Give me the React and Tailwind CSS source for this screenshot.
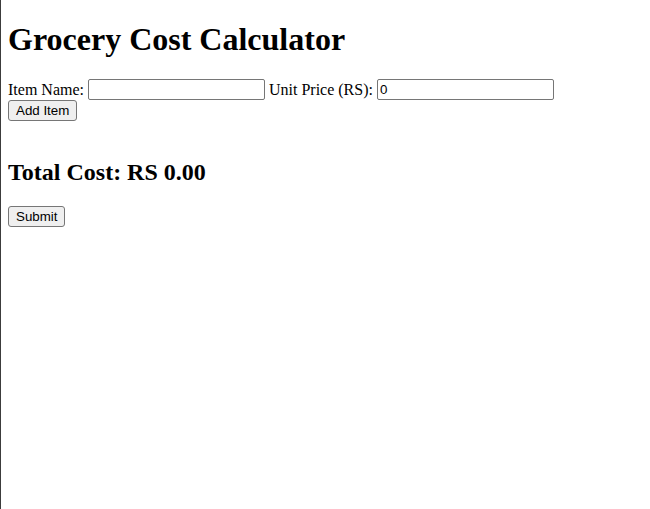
import { useState } from "react";

export default function App() {
  const [items, setItems] = useState([]);
  const [name, setName] = useState("");
  const [price, setPrice] = useState("0");

  const total = items.reduce((sum, i) => sum + i.price, 0);

  const handleAdd = () => {
    if (!name.trim()) return;
    setItems((prev) => [...prev, { name, price: parseFloat(price) || 0 }]);
    setName("");
    setPrice("0");
  };

  const inputCls =
    "w-[177px] h-[21px] border border-[#767676] rounded-[2px] px-[2px] py-[1px] text-[13.33px] bg-white text-black font-['Liberation_Sans',Arial,sans-serif] outline-none";
  const buttonCls =
    "bg-[#efefef] border border-[#767676] rounded-[3px] px-[7px] h-[21px] text-[13.33px] leading-none text-black font-['Liberation_Sans',Arial,sans-serif]";

  return (
    <div className="h-screen border-l border-[#3c3c3c] bg-white px-[7px] pt-[21px] font-['Liberation_Serif','Times_New_Roman',serif] text-black text-[16px]">
      <h1 className="text-[32px] font-bold leading-[37px] mb-[21px]">
        Grocery Cost Calculator
      </h1>

      <div className="flex items-center gap-[4px] h-[21px]">
        <label>Item Name:</label>
        <input
          type="text"
          className={inputCls}
          value={name}
          onChange={(e) => setName(e.target.value)}
        />
        <label>Unit Price (RS):</label>
        <input
          type="number"
          className={inputCls}
          value={price}
          onChange={(e) => setPrice(e.target.value)}
        />
      </div>
      <div className="flex">
        <button onClick={handleAdd} className={buttonCls}>
          Add Item
        </button>
      </div>

      <ul className="pt-[17px]">
        {items.map((item, idx) => (
          <li key={idx}>
            {item.name} - RS {item.price.toFixed(2)}
          </li>
        ))}
      </ul>

      <h2 className="text-[24px] font-bold leading-[28px] mt-[20px] mb-[18px]">
        Total Cost: RS {total.toFixed(2)}
      </h2>

      <button className={buttonCls}>Submit</button>
    </div>
  );
}
